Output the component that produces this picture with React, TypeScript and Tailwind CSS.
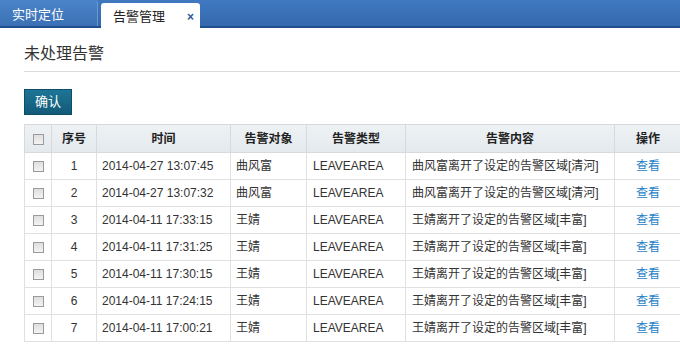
import React from 'react';

const rows = [
    { id: 1, time: '2014-04-27 13:07:45', who: '曲风富', type: 'LEAVEAREA', msg: '曲风富离开了设定的告警区域[清河]' },
    { id: 2, time: '2014-04-27 13:07:32', who: '曲风富', type: 'LEAVEAREA', msg: '曲风富离开了设定的告警区域[清河]' },
    { id: 3, time: '2014-04-11 17:33:15', who: '王婧', type: 'LEAVEAREA', msg: '王婧离开了设定的告警区域[丰富]' },
    { id: 4, time: '2014-04-11 17:31:25', who: '王婧', type: 'LEAVEAREA', msg: '王婧离开了设定的告警区域[丰富]' },
    { id: 5, time: '2014-04-11 17:30:15', who: '王婧', type: 'LEAVEAREA', msg: '王婧离开了设定的告警区域[丰富]' },
    { id: 6, time: '2014-04-11 17:24:15', who: '王婧', type: 'LEAVEAREA', msg: '王婧离开了设定的告警区域[丰富]' },
    { id: 7, time: '2014-04-11 17:00:21', who: '王婧', type: 'LEAVEAREA', msg: '王婧离开了设定的告警区域[丰富]' },
];

function Box() {
    return (
        <span className="inline-block w-[11px] h-[11px] border border-[#9a9a9a] bg-gradient-to-b from-[#dedede] to-[#f4f4f4] align-middle" />
    );
}

export default function App() {
    const font = { fontFamily: '"Liberation Sans", "Noto Sans CJK SC", sans-serif' };
    return (
        <div className="w-[680px] h-[344px] overflow-hidden bg-white text-[#333] text-[12px]" style={font}>
            {/* Tab bar */}
            <div className="h-[28px] flex items-end bg-gradient-to-b from-[#4079c0] to-[#3468ad] border-b-2 border-[#1f4f8e]">
                <div className="w-[98px] h-[26px] flex items-center pl-[12px] pt-[4px] text-white text-[13px] bg-gradient-to-b from-[#4b84c9] to-[#3b70b4] rounded-tr-[3px] border-r border-[#6a98d0]">
                    实时定位
                </div>
                <div className="ml-[3px] w-[99px] h-[25px] -mb-[2px] flex items-center justify-between pl-[12px] pr-[6px] pt-[3px] bg-white rounded-t-[3px] text-[13px] text-[#222]">
                    <span>告警管理</span>
                    <span className="text-[#2a5a9a] font-bold text-[12px]">×</span>
                </div>
            </div>

            <div className="pl-[24px]">
                {/* Title */}
                <div className="h-[44px] flex items-center border-b border-[#dcdcdc] text-[16px] text-[#333] pt-[9px]">
                    未处理告警
                </div>

                <button className="mt-[17px] w-[48px] h-[26px] bg-gradient-to-b from-[#1d7597] to-[#135a78] border border-[#0f4c66] text-white text-[13px]">
                    确认
                </button>

                <table className="mt-[9px] table-fixed border-collapse w-[657px]">
                    <colgroup>
                        <col className="w-[27px]" />
                        <col className="w-[45px]" />
                        <col className="w-[134px]" />
                        <col className="w-[76px]" />
                        <col className="w-[99px]" />
                        <col className="w-[209px]" />
                        <col className="w-[67px]" />
                    </colgroup>
                    <thead>
                        <tr className="h-[28px] bg-gradient-to-b from-[#eef2f5] to-[#e3e9ed] font-bold text-[#222]">
                            <th className="border border-[#d6dadd] text-center"><Box /></th>
                            <th className="border border-[#d6dadd] text-center">序号</th>
                            <th className="border border-[#d6dadd] text-center">时间</th>
                            <th className="border border-[#d6dadd] text-center">告警对象</th>
                            <th className="border border-[#d6dadd] text-center">告警类型</th>
                            <th className="border border-[#d6dadd] text-center">告警内容</th>
                            <th className="border border-[#d6dadd] text-center">操作</th>
                        </tr>
                    </thead>
                    <tbody>
                        {rows.map((r) => (
                            <tr key={r.id} className="h-[27px]">
                                <td className="border border-[#e0e0e0] text-center"><Box /></td>
                                <td className="border border-[#e0e0e0] text-center">{r.id}</td>
                                <td className="border border-[#e0e0e0] pl-[5px]">{r.time}</td>
                                <td className="border border-[#e0e0e0] pl-[5px]">{r.who}</td>
                                <td className="border border-[#e0e0e0] pl-[6px]">{r.type}</td>
                                <td className="border border-[#e0e0e0] pl-[6px]">{r.msg}</td>
                                <td className="border border-[#e0e0e0] text-center text-[#1f7fc9]">查看</td>
                            </tr>
                        ))}
                    </tbody>
                </table>
            </div>
        </div>
    );
}
